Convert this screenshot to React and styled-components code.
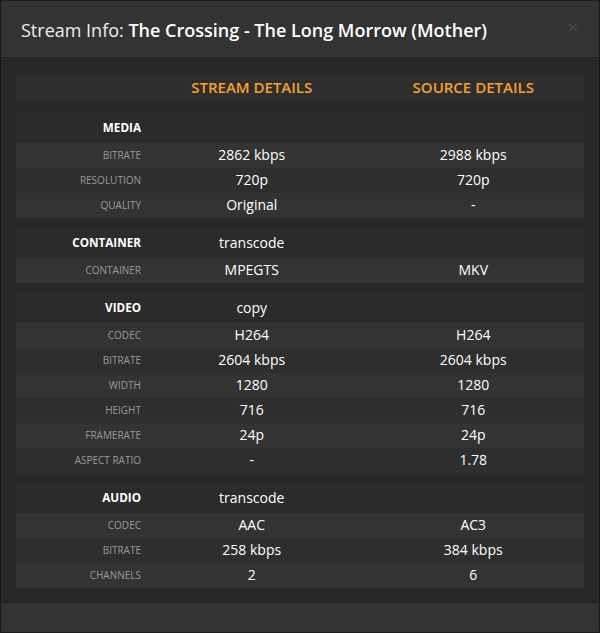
import React from "react";
import styled, { createGlobalStyle } from "styled-components";

const GlobalStyle = createGlobalStyle`
  html, body {
    margin: 0;
    padding: 0;
    background: #1c1c1c;
  }
  * {
    box-sizing: border-box;
  }
`;

const sections = [
  {
    title: "MEDIA",
    value: "",
    rows: [
      ["BITRATE", "2862 kbps", "2988 kbps"],
      ["RESOLUTION", "720p", "720p"],
      ["QUALITY", "Original", "-"]
    ]
  },
  {
    title: "CONTAINER",
    value: "transcode",
    rows: [["CONTAINER", "MPEGTS", "MKV"]]
  },
  {
    title: "VIDEO",
    value: "copy",
    rows: [
      ["CODEC", "H264", "H264"],
      ["BITRATE", "2604 kbps", "2604 kbps"],
      ["WIDTH", "1280", "1280"],
      ["HEIGHT", "716", "716"],
      ["FRAMERATE", "24p", "24p"],
      ["ASPECT RATIO", "-", "1.78"]
    ]
  },
  {
    title: "AUDIO",
    value: "transcode",
    rows: [
      ["CODEC", "AAC", "AC3"],
      ["BITRATE", "258 kbps", "384 kbps"],
      ["CHANNELS", "2", "6"]
    ]
  }
];

const Modal = styled.div`
  width: 600px;
  height: 633px;
  display: flex;
  flex-direction: column;
  background: #282828;
  border: 1px solid #1a1a1a;
  border-radius: 4px;
  overflow: hidden;
  font-family: "Open Sans", "Noto Sans", sans-serif;
  color: #fff;
`;

const Header = styled.div`
  height: 57px;
  flex: none;
  display: flex;
  align-items: center;
  justify-content: space-between;
  padding: 2px 20px 0 20px;
  background: #333;
  border-bottom: 1px solid #222;
`;

const Title = styled.h4`
  margin: 0;
  font-size: 18px;
  font-weight: 400;
  color: #eee;
  b {
    font-weight: 600;
    color: #fff;
  }
`;

const Close = styled.span`
  font-size: 18px;
  line-height: 1;
  font-weight: 300;
  color: #5a5a5a;
  margin-top: -6px;
  margin-right: 1px;
`;

const Body = styled.div`
  flex: 1;
  padding: 15px 15px 0;
  display: flex;
  flex-direction: column;
  gap: 10px;
`;

const Section = styled.div`
  display: grid;
  grid-template-columns: 125px 1fr 1fr;
`;

const Row = styled.div`
  display: contents;
  & > * {
    height: ${(p) => (p.$tall ? 30 : 25)}px;
    background: ${(p) => p.$bg};
    padding-bottom: 2px;
  }
`;

const Label = styled.div`
  display: flex;
  align-items: center;
  justify-content: flex-end;
  font-size: ${(p) => (p.$head ? 11.7 : 10)}px;
  font-weight: ${(p) => (p.$head ? 700 : 400)};
  color: ${(p) => (p.$head ? "#fff" : "#999")};
`;

const Cell = styled.div`
  display: flex;
  align-items: center;
  justify-content: center;
  font-size: ${(p) => (p.$orange ? 15 : 14)}px;
  color: ${(p) => (p.$orange ? "#f5a12a" : "#fff")};
  font-weight: ${(p) => (p.$orange ? 600 : 400)};
`;

const Footer = styled.div`
  height: 30px;
  flex: none;
  background: #333;
  border-top: 1px solid #222;
`;

const App = () => {
  return (
    <>
      <GlobalStyle />
      <Modal>
        <Header>
          <Title>
            Stream Info: <b>The Crossing - The Long Morrow (Mother)</b>
          </Title>
          <Close>×</Close>
        </Header>
        <Body>
          <Section>
            <Row $tall $bg="#2e2e2e">
              <Label />
              <Cell $orange>STREAM DETAILS</Cell>
              <Cell $orange>SOURCE DETAILS</Cell>
            </Row>
          </Section>
          {sections.map((s) => (
            <Section key={s.title}>
              <Row $tall $bg="#2b2b2b">
                <Label $head>{s.title}</Label>
                <Cell>{s.value}</Cell>
                <Cell />
              </Row>
              {s.rows.map((r, i) => (
                <Row key={r[0]} $bg={i % 2 === 0 ? "#333" : "#2e2e2e"}>
                  <Label>{r[0]}</Label>
                  <Cell>{r[1]}</Cell>
                  <Cell>{r[2]}</Cell>
                </Row>
              ))}
            </Section>
          ))}
        </Body>
        <Footer />
      </Modal>
    </>
  );
};

export default App;
